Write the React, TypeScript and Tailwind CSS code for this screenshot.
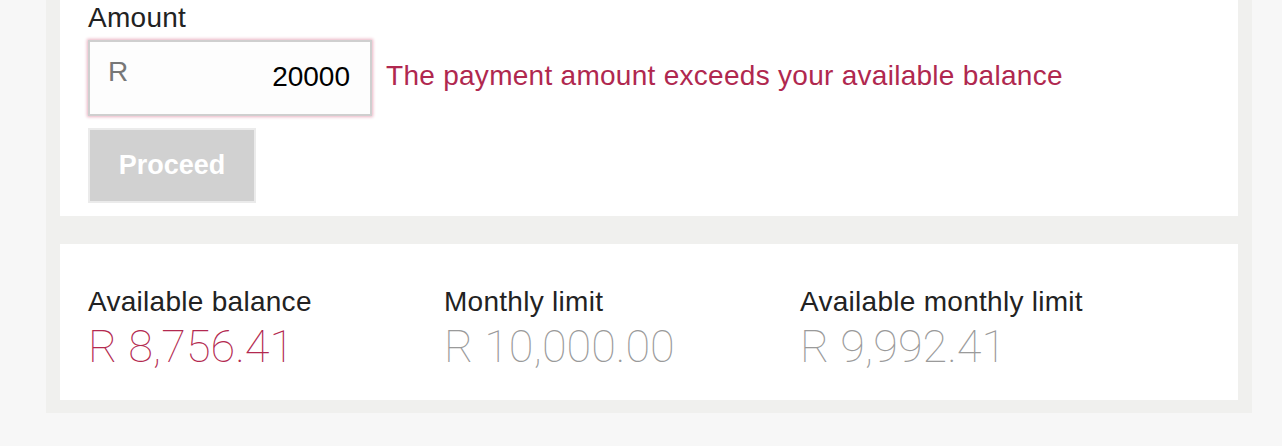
const stats = [
  { label: "Available balance", value: "R 8,756.41", tone: "text-[#b3294f]" },
  { label: "Monthly limit", value: "R 10,000.00", tone: "text-[#9a9a9a]" },
  { label: "Available monthly limit", value: "R 9,992.41", tone: "text-[#9a9a9a]" },
];

export default function App() {
  return (
    <div className="min-h-screen bg-[#f7f7f7] font-['Liberation_Sans',Arial,sans-serif]">
      <div className="ml-[46px] w-[1206px] bg-[#f0f0ee] px-[14px] pb-[13px]">
        {/* Payment form */}
        <div className="h-[216px] bg-white pl-[28px] pt-[3px]">
          <label className="block text-[28px] leading-[30px] tracking-[0.01em] text-[#222]">Amount</label>
          <div className="mt-[7px] flex items-start">
            <div className="flex h-[76px] w-[284px] items-start justify-between border-2 border-[#cfcfcf] bg-[#fdfdfd] pl-[18px] pr-[20px] shadow-[0_0_3px_1px_#eab3c2]">
              <span className="mt-[16px] text-[28px] leading-[28px] text-[#777]">R</span>
              <span className="mt-[21px] text-[28px] leading-[28px] text-black">20000</span>
            </div>
            <p className="ml-[14px] mt-[22px] text-[28px] leading-[28px] tracking-[0.01em] text-[#b0284f]">
              The payment amount exceeds your available balance
            </p>
          </div>
          <button
            disabled
            className="mt-[12px] flex h-[75px] w-[168px] items-center justify-center border-2 border-[#ebebeb] bg-[#d1d1d1] text-[27px] font-bold text-white"
          >
            Proceed
          </button>
        </div>

        {/* Balances */}
        <div className="mt-[28px] flex h-[156px] bg-white pl-[28px] pt-[43px]">
          {stats.map((s) => (
            <div key={s.label} className="w-[356px]">
              <div className="text-[28px] leading-[30px] tracking-[0.01em] text-[#222]">{s.label}</div>
              <div className={`mt-[7px] font-['Roboto',sans-serif] text-[45px] font-thin leading-[46px] ${s.tone}`}>
                {s.value}
              </div>
            </div>
          ))}
        </div>
      </div>
    </div>
  );
}
